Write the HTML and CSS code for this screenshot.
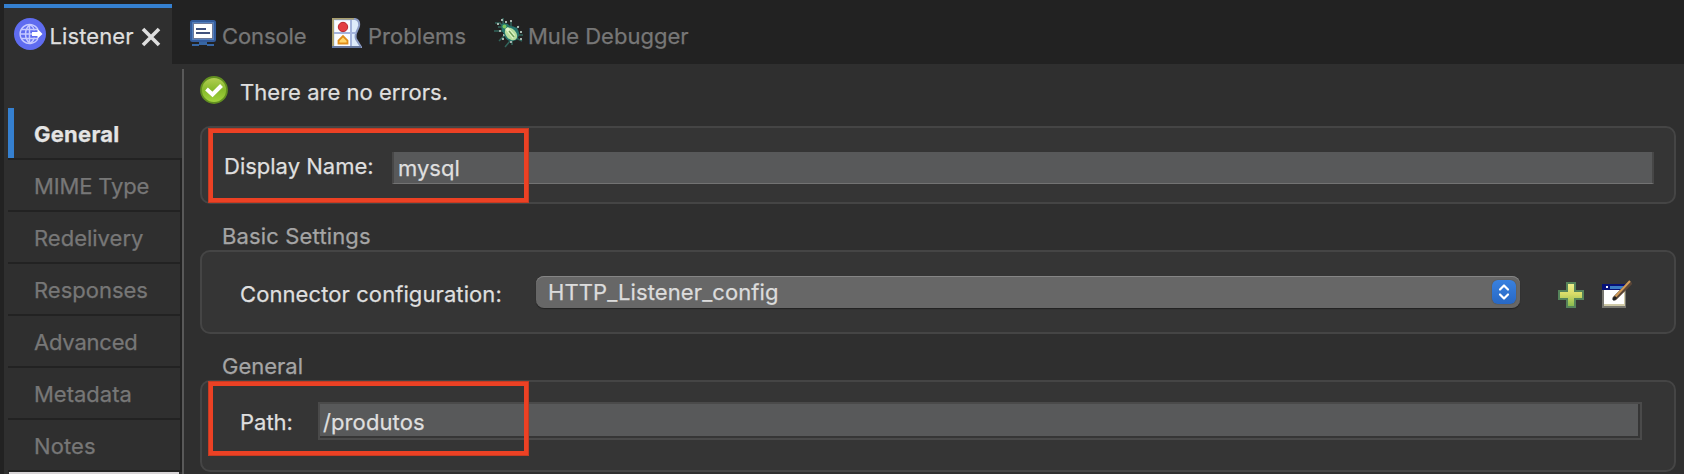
FILE: index.html
```
<!DOCTYPE html>
<html lang="en">
<head>
<meta charset="utf-8">
<title>Listener</title>
<link rel="stylesheet" href="styles.css">
</head>
<body>
<div class="window">
  <header class="tabs">
    <div class="tab tab-active">
      <svg class="icon-listener" width="32" height="32" viewBox="0 0 32 32"><circle cx="16" cy="16" r="16" fill="#5f6cf0"/><g fill="none" stroke="#c6caff" stroke-width="1.5"><path d="M24 11.5A9.5 9.5 0 1 0 24 20.500"/><path d="M16 6.500c-6 5-6 14 0 19M16 6.500c3 2 4 4 4.200 6M16 25.500c3-2 4-4 4.200-6M7.500 11.500H24M6.500 16H18M7.500 20.500H24M15.500 6.500v19"/></g><path d="M18 14h5.500v-3.200l5 5.200-5 4.800V18H18z" fill="#fff"/></svg>
      <span class="t t-listener">Listener</span>
      <svg class="icon-close" width="20" height="20" viewBox="0 0 20 20"><path d="M2 2l16 16M18 2L2 18" stroke="#dedede" stroke-width="3.600"/></svg>
    </div>
    <div class="tab tab-console">
      <svg width="26" height="26" viewBox="0 0 26 26"><rect x="1" y="1" width="24" height="20" rx="1.500" fill="#5480be" stroke="#345c9c" stroke-width="2"/><rect x="3.500" y="3.500" width="19" height="15" fill="#fff" stroke="#6c7898"/><path d="M6 9h10M6 13h14" stroke="#41527d" stroke-width="2"/><path d="M9 22h8v2h7v2h-7v-1H9v1H2v-2h7z" fill="#3766a4"/></svg>
      <span class="t t-console">Console</span>
    </div>
    <div class="tab tab-problems">
      <svg width="30" height="30" viewBox="0 0 30 30"><path d="M1 1h22q5 1 4 7c-1 5-5 7-3 13l5 8H1z" fill="#dfecfb" stroke="#8c9cc4" stroke-width="2"/><path d="M0 0h22v1.500H2V28H0z" fill="#aaa06e"/><path d="M3 3h15v25H3z" fill="#fafcff"/><path d="M2 15h22M19 2v26" stroke="#a4b4dc" stroke-width="2"/><path d="M0 28h29v2H0z" fill="#66789f"/><circle cx="11" cy="9" r="4.700" fill="#e33f42" stroke="#b7282e"/><path d="M6.500 25.500v-3L11 18l4.500 4.500v3z" fill="#ffd66c" stroke="#df8d1b" stroke-width="1.800"/></svg>
      <span class="t t-problems">Problems</span>
    </div>
    <div class="tab tab-debugger">
      <svg width="30" height="30" viewBox="0 0 30 30"><path d="M9 0v5l3 5M17 2v9M1 5h5l5 6M0 13h10M25 8l-5 5M29 17h-7M28 23l-6-3M5 23l6-6M11 29l5-6M18 21v6M4 9h5" fill="none" stroke="#32645b" stroke-width="1.500"/><path d="M8 1v2M17 2v2M4 5v2M11 4h2M5 13h2M23 9h2M26 14h2M26 21h2M8 21h2M16 24h2M9 17h2" stroke="#a4b4ac" stroke-width="2"/><path d="M8 6q5-2 8 2 8 0 9 7 0 7-6 8-7 1-9-7-4-4-2-10z" fill="#24736c"/><ellipse cx="17" cy="16" rx="5" ry="7.200" fill="#b6dc9d" transform="rotate(-43 17 16)"/><path d="M11 11l3-2 7 8-2 4z" fill="#e0f5c8"/><path d="M15 13l5 6" stroke="#6fa05c" stroke-width="1.500"/><circle cx="10.500" cy="8.500" r="2" fill="#7bc85d"/></svg>
      <span class="t t-debugger">Mule Debugger</span>
    </div>
  </header>
  <div class="body">
    <nav class="nav">
      <div class="nav-item nav-active"><span class="t n-general">General</span></div>
      <div class="nav-item"><span class="t n-mime">MIME Type</span></div>
      <div class="nav-item"><span class="t n-redelivery">Redelivery</span></div>
      <div class="nav-item"><span class="t n-responses">Responses</span></div>
      <div class="nav-item"><span class="t n-advanced">Advanced</span></div>
      <div class="nav-item"><span class="t n-metadata">Metadata</span></div>
      <div class="nav-item"><span class="t n-notes">Notes</span></div>
      <div class="nav-end"></div>
    </nav>
    <main class="main">
      <div class="status">
        <svg width="28" height="28" viewBox="0 0 28 28"><defs><linearGradient id="ok" x2="0" y2="1"><stop stop-color="#b5d055"/><stop offset=".5" stop-color="#86b92b"/><stop offset="1" stop-color="#a4d63f"/></linearGradient></defs><circle cx="14" cy="14" r="13" fill="url(#ok)" stroke="#628f20" stroke-width="1.800"/><path d="M6.500 13l6 5.500 9-9" fill="none" stroke="#fff" stroke-width="4"/></svg>
        <span class="t t-status">There are no errors.</span>
      </div>
      <section class="group group-name">
        <span class="t label t-name">Display Name:</span>
        <div class="field field-name"><span class="t t-mysql">mysql</span></div>
        <div class="mark mark-name"></div>
      </section>
      <h2 class="heading heading-basic"><span class="t t-basic">Basic Settings</span></h2>
      <section class="group group-basic">
        <span class="t label t-connector">Connector configuration:</span>
        <div class="select">
          <span class="t t-config">HTTP_Listener_config</span>
          <svg class="stepper" width="24" height="24" viewBox="0 0 24 24"><path d="M8 9.500l4-4 4 4M8 14.500l4 4 4-4" fill="none" stroke="#fff" stroke-width="2.200" stroke-linecap="round" stroke-linejoin="round"/></svg>
        </div>
        <svg class="icon-add" width="26" height="26" viewBox="0 0 26 26"><defs><linearGradient id="plus" x2="0" y2="1"><stop stop-color="#eef08d"/><stop offset=".45" stop-color="#d8dc68"/><stop offset="1" stop-color="#82b94d"/></linearGradient></defs><path d="M9 1h8v8h8v8h-8v8H9v-8H1V9h8z" fill="url(#plus)" stroke="#55835a" stroke-width="2"/></svg>
        <svg class="icon-edit" width="30" height="28" viewBox="0 0 30 28"><path d="M0 4h24v24H0z" fill="#77766f"/><path d="M2 10h20v15H2z" fill="#fff"/><path d="M2 24h20V10h1v16H2z" fill="#cfc9a6"/><path d="M0 4h24v6H0z" fill="#071277"/><path d="M8 6h14v3H8z" fill="#3b7dc5"/><path d="M4 6h2v2H4z" fill="#fff"/><path d="M12 19L29 2" stroke="#594537" stroke-width="4.500"/><path d="M13 17L28 1" stroke="#d09a57" stroke-width="2"/><path d="M10 19l3-3 2 2-3 3z" fill="#222"/></svg>
      </section>
      <h2 class="heading heading-general"><span class="t t-general">General</span></h2>
      <section class="group group-path">
        <span class="t label t-path">Path:</span>
        <div class="field field-path"><span class="t t-produtos">/produtos</span></div>
        <div class="mark mark-path"></div>
      </section>
    </main>
  </div>
</div>
</body>
</html>
```
FILE: styles.css
```
* { box-sizing: border-box; }
body {
  margin: 0;
  background: #222;
  color: #dfdfdf;
  font: 22px/26px Inter, "Liberation Sans", sans-serif;
}
svg { display: block; flex: none; }
.window { width: 1684px; height: 474px; overflow: hidden; padding-left: 4px; }
.t { white-space: nowrap; display: block; -webkit-text-stroke: .25px currentColor; }

.tabs { display: flex; height: 64px; }
.tab { display: flex; align-items: flex-start; color: #777; padding-top: 18px; }
.tab .t { margin-top: 5px; }
.tab-active {
  width: 168px;
  margin-top: 4px;
  padding: 10px 0 0 10px;
  border-top: 4px solid #3580d0;
  background: #2f2f2f;
  color: #dfdfdf;
}
.tab-active .t { width: 95px; padding-left: 3.500px; letter-spacing: .1px; }
.icon-close { margin-top: 9px; }
.tab-console { width: 142px; padding: 20px 0 0 18px; }
.tab-console .t { margin: 3px 0 0 6px; letter-spacing: -.1px; }
.tab-problems { width: 162px; padding-left: 18px; }
.tab-problems .t { padding-left: 6px; letter-spacing: .05px; }
.tab-debugger { padding-left: 18px; }
.tab-debugger .t { padding-left: 4px; }

.body { display: flex; height: 410px; background: #2f2f2f; }
.nav { width: 178px; padding: 44px 0 0 4px; }
.nav-item {
  height: 52px;
  padding: 13px 0 0 26px;
  border-bottom: 2px solid #222;
  border-right: 2px solid #222;
  color: #777;
}
.nav-active {
  padding: 13px 0 0 20px;
  border-left: 6px solid #3580d0;
  border-right: 0;
  border-bottom: 0;
  height: 50px;
  color: #e4e4e4;
  font-weight: 700;
  letter-spacing: .25px;
}
.nav-active + .nav-item { border-top: 2px solid #222; height: 54px; }
.n-mime { letter-spacing: -.15px; }
.n-advanced { letter-spacing: -.2px; }
.n-notes { letter-spacing: .1px; }
.nav-end { width: 170px; height: 2px; margin-left: 1px; background: #d6d3d5; }

.main {
  flex: 1;
  margin-top: 5px;
  padding-left: 16px;
  border-left: 2px solid #595959;
}
.status { display: flex; height: 57px; padding: 7px 0 0; }
.status .t { margin: 3px 0 0 12px; letter-spacing: .03px; }
.group {
  position: relative;
  display: flex;
  width: 1476px;
  border: 2px solid #454545;
  border-radius: 10px;
  background: #353535;
}
.group-name { height: 78px; }
.group-name .label { width: 190px; padding: 25px 0 0 22px; }
.group-basic { height: 84px; }
.group-basic .label { width: 334px; padding: 29px 0 0 38px; letter-spacing: .09px; }
.group-path { height: 92px; }
.group-path .label { width: 116px; padding: 27px 0 0 38px; }
.heading { margin: 0; height: 46px; padding: 19px 0 0 22px; font: inherit; color: #a5a5a5; }
.t-basic { letter-spacing: .15px; }

.field { background: #58595a; }
.field-name {
  width: 1262px;
  height: 32px;
  margin-top: 24px;
  padding: 3px 0 0 4px;
  border: solid #474747;
  border-width: 0 2px 1px;
  border-bottom-color: #737373;
}
.field-path {
  width: 1324px;
  height: 38px;
  margin-top: 20px;
  padding: 5px 0 0 3px;
  border: 2px solid #4a4a4a;
  box-shadow: inset -2px -2px #363636;
}
.t-produtos { letter-spacing: .1px; }
.mark {
  position: absolute;
  left: 6px;
  width: 321px;
  border: 5px solid #ec4124;
  outline: 1px solid rgba(130, 50, 35, .35);
  outline-offset: -1px;
}
.mark-name { top: 0; height: 75px; }
.mark-path { top: -1px; height: 75px; }

.select {
  display: flex;
  justify-content: space-between;
  width: 984px;
  height: 32px;
  margin-top: 24px;
  padding: 4px 4px 0 12px;
  border-radius: 8px;
  background: #676767;
  box-shadow: inset 0 1px #858585, 0 1px 1px #222;
}
.select .t { color: #dcdcdc; margin-top: -1px; letter-spacing: .1px; }
.stepper { border-radius: 6px; background: linear-gradient(#3981df, #2868c4); box-shadow: 0 0 1px #333; }
.icon-add { margin: 30px 0 0 38px; }
.icon-edit { margin: 28px 0 0 18px; }
```
